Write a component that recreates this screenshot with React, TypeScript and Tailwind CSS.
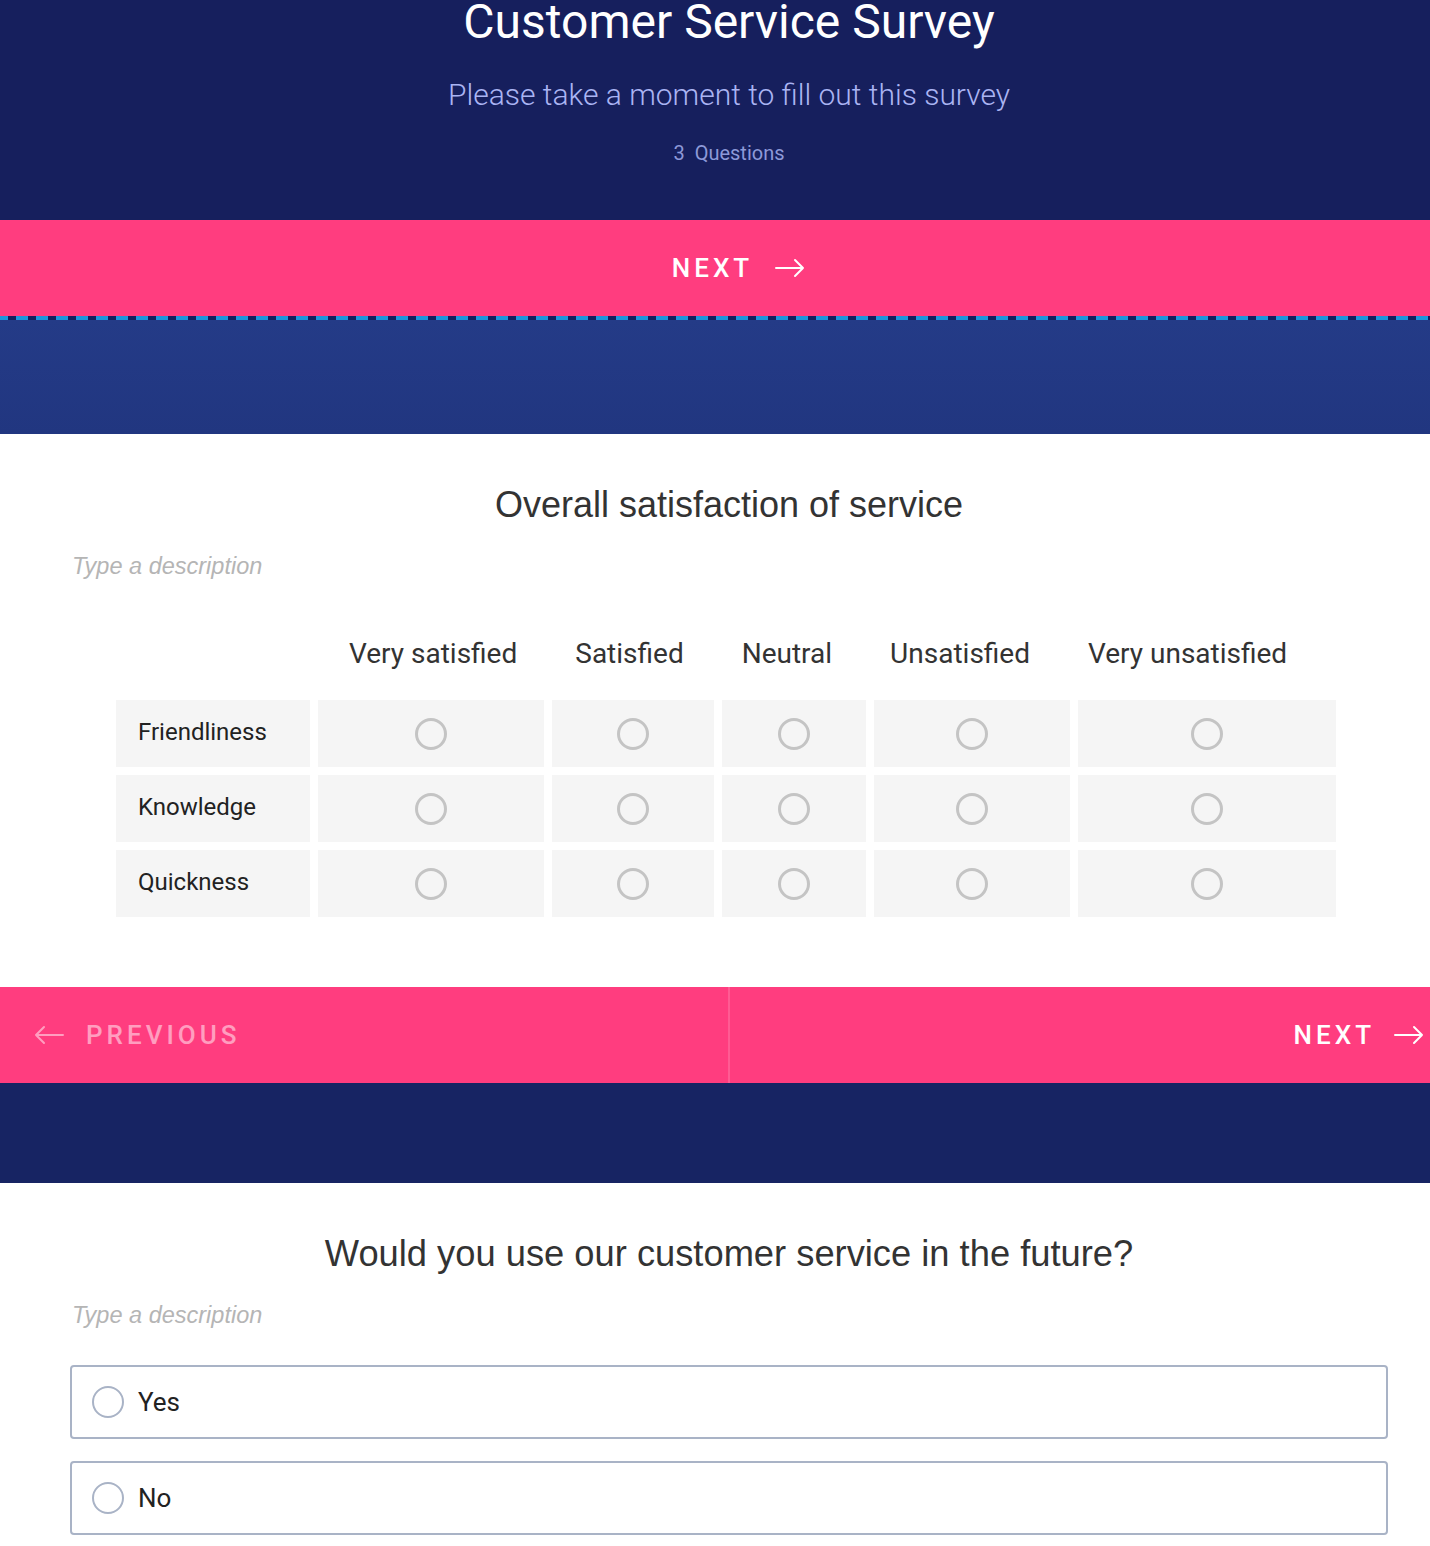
import React from 'react';

const columns = [
  { label: 'Very satisfied', width: 'w-[226px]' },
  { label: 'Satisfied', width: 'w-[162px]' },
  { label: 'Neutral', width: 'w-[144px]' },
  { label: 'Unsatisfied', width: 'w-[196px]' },
  { label: 'Very unsatisfied', width: 'w-[258px]' },
];

const rows = ['Friendliness', 'Knowledge', 'Quickness'];

const roboto = { fontFamily: 'Roboto, "Liberation Sans", sans-serif' };
const helv = { fontFamily: '"Liberation Sans", Arial, sans-serif' };

function ArrowRight({ className = '' }: { className?: string }) {
  return (
    <svg className={className} width="30" height="20" viewBox="0 0 30 20" fill="none" stroke="currentColor" strokeWidth={2} strokeLinecap="round" strokeLinejoin="round">
      <path d="M1 10h27M20 2l8 8-8 8" />
    </svg>
  );
}

function ArrowLeft({ className = '' }: { className?: string }) {
  return (
    <svg className={className} width="30" height="20" viewBox="0 0 30 20" fill="none" stroke="currentColor" strokeWidth={2} strokeLinecap="round" strokeLinejoin="round">
      <path d="M29 10H2M10 2l-8 8 8 8" />
    </svg>
  );
}

function Radio() {
  return <span className="block w-[32px] h-[32px] rounded-full border-[3px] border-[#c4c4c4]" />;
}

export default function App() {
  return (
    <div className="w-[1430px] overflow-hidden bg-white">
      <div className="w-[1458px]" style={roboto}>
        {/* Header */}
        <div className="h-[220px] bg-[#161f5d] flex flex-col items-center">
          <h1 className="-mt-[6px] text-[48px] leading-[56px] text-white">Customer Service Survey</h1>
          <p className="mt-[25px] text-[30px] leading-[40px] font-light text-[#aab4f3]">
            Please take a moment to fill out this survey
          </p>
          <p className="mt-[26px] text-[20px] leading-[24px] text-[#8d99d8]">
            3&nbsp;&nbsp;Questions
          </p>
        </div>

        {/* Start button */}
        <div className="h-[96px] bg-[#ff3d7f] flex items-center justify-center pl-[19px] text-white">
          <span className="text-[26px] font-medium tracking-[4px]">NEXT</span>
          <ArrowRight className="ml-[22px]" />
        </div>
        <div className="h-[4px] bg-[repeating-linear-gradient(90deg,#1b95dc_0_8px,#151e5c_8px_16px,#1b95dc_16px_20px)]" />
        <div className="h-[114px] bg-gradient-to-b from-[#243b87] to-[#213680]" />

        {/* Question 1 */}
        <div className="px-[70px] pt-[49px] pb-[70px]">
          <h2 className="text-center text-[36px] leading-[44px] text-[#333]" style={helv}>
            Overall satisfaction of service
          </h2>
          <p className="mt-[24px] ml-[2px] text-[23.5px] leading-[30px] italic text-[#b5b5b5]" style={helv}>
            Type a description
          </p>

          <div className="ml-[46px] mt-[49px]">
            <div className="flex gap-[58px] h-[48px] items-center pl-[233px]">
              {columns.map((c) => (
                <div key={c.label} className="text-[28px] text-[#333] whitespace-nowrap">
                  {c.label}
                </div>
              ))}
            </div>
            <div className="mt-[22px] flex flex-col gap-[8px]">
              {rows.map((r) => (
                <div key={r} className="flex gap-[8px] h-[67px]">
                  <div className="w-[194px] bg-[#f5f5f5] flex items-center pl-[22px] pb-[3px] text-[24px] text-[#222]">
                    {r}
                  </div>
                  {columns.map((c) => (
                    <div key={c.label} className={`${c.width} bg-[#f5f5f5] flex items-center justify-center`}>
                      <Radio />
                    </div>
                  ))}
                </div>
              ))}
            </div>
          </div>
        </div>

        {/* Nav bar */}
        <div className="h-[96px] bg-[#ff3d7f] flex">
          <div className="flex-1 flex items-center pl-[34px] text-white/50">
            <ArrowLeft />
            <span className="ml-[22px] text-[26px] font-medium tracking-[4px]">PREVIOUS</span>
          </div>
          <div className="w-[2px] bg-[#ff5b93]" />
          <div className="flex-1 flex items-center justify-end pr-[34px] text-white">
            <span className="text-[26px] font-medium tracking-[4px]">NEXT</span>
            <ArrowRight className="ml-[19px]" />
          </div>
        </div>
        <div className="h-[100px] bg-[#172463]" />

        {/* Question 2 */}
        <div className="px-[70px] pt-[49px] pb-[40px]">
          <h2 className="text-center text-[36.3px] leading-[44px] text-[#333]" style={helv}>
            Would you use our customer service in the future?
          </h2>
          <p className="mt-[24px] ml-[2px] text-[23.5px] leading-[30px] italic text-[#b5b5b5]" style={helv}>
            Type a description
          </p>
          <div className="mt-[35px] flex flex-col gap-[22px]">
            {['Yes', 'No'].map((o) => (
              <div key={o} className="h-[74px] border-2 border-[#a9b3c6] rounded-[4px] flex items-center pl-[20px]">
                <span className="w-[32px] h-[32px] rounded-full border-2 border-[#a9b3c6]" />
                <span className="ml-[14px] text-[26px] text-[#222]">{o}</span>
              </div>
            ))}
          </div>
        </div>
      </div>
    </div>
  );
}
